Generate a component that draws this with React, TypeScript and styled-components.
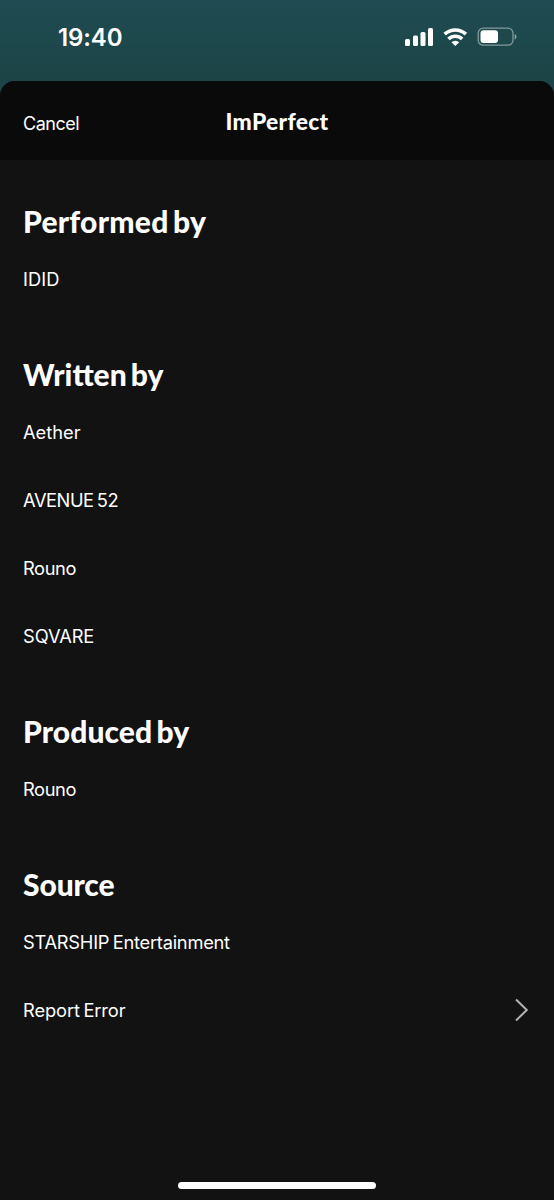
import React from "react";
import styled, { createGlobalStyle } from "styled-components";

const Global = createGlobalStyle`
  * { box-sizing: border-box; }
  body { margin: 0; background: #121212; font-family: Inter, "Liberation Sans", sans-serif; color: #fff; }
`;
const Screen = styled.div`
  width: 554px; height: 1200px; overflow: hidden; display: flex; flex-direction: column; position: relative;
  background: linear-gradient(#1f4b52, #1d484c 40px, #1c4244 95px);
`;
const StatusBar = styled.header`
  height: 81px; flex: none; display: flex; justify-content: space-between; align-items: flex-start;
  padding: 23px 37px 0 58px;
`;
const Clock = styled.span`
  font-size: 24px; line-height: 30px; font-weight: 600; letter-spacing: -0.1px;
`;
const StatusIcons = styled.svg`display: block; margin-top: 2px;`;
const Sheet = styled.main`
  flex: 1; background: #121212; border-radius: 15px 15px 0 0; overflow: hidden;
`;
const NavBar = styled.nav`
  height: 79px; background: #0a0a0a; display: grid; grid-template-columns: 1fr auto 1fr; align-items: center;
  padding: 3px 23px 0;
`;
const Label = styled.span<{ $spacing: number }>`
  white-space: nowrap; font-size: 18.3px; line-height: 24px; letter-spacing: ${p => p.$spacing}px; word-spacing: -1.5px;
`;
const Cancel = styled.button`
  all: unset; justify-self: start; font-size: 18px; line-height: 24px; padding-top: 4px; letter-spacing: -0.5px;
`;
const Title = styled.h1`
  margin: 0; padding-bottom: 2px; font-family: Lato, sans-serif; font-size: 22.8px; line-height: 28px; font-weight: 900;
  letter-spacing: 0.3px;
`;
const Content = styled.div`padding: 35px 23px 0; display: flex; flex-direction: column;`;
const Section = styled.section`margin-bottom: 35px; display: flex; flex-direction: column;`;
const Heading = styled.h2<{ $spacing: string }>`
  margin: 0; height: 50px; line-height: 52px; font-family: Lato, sans-serif; font-size: 30px; font-weight: 900;
  letter-spacing: ${p => p.$spacing}; word-spacing: -3px; white-space: nowrap;
`;
const Row = styled.div`
  height: 68px; display: flex; align-items: center; justify-content: space-between;
`;
const Chevron = styled.svg`display: block; margin-right: 1px;`;
const HomeIndicator = styled.div`
  position: absolute; left: 178px; bottom: 11px; width: 198px; height: 7px; border-radius: 4px; background: #fff;
`;

interface Credit { name: string; spacing: number; link?: boolean }
interface Group { title: string; spacing: string; credits: Credit[] }

const groups: Group[] = [
  { title: "Performed by", spacing: "0.27px", credits: [{ name: "IDID", spacing: 0.1 }] },
  {
    title: "Written by", spacing: "normal", credits: [
      { name: "Aether", spacing: 0 },
      { name: "AVENUE 52", spacing: -0.45 },
      { name: "Rouno", spacing: -0.4 },
      { name: "SQVARE", spacing: -0.1 },
    ],
  },
  { title: "Produced by", spacing: "0.1px", credits: [{ name: "Rouno", spacing: -0.4 }] },
  {
    title: "Source", spacing: "-0.1px", credits: [
      { name: "STARSHIP Entertainment", spacing: -0.25 },
      { name: "Report Error", spacing: -0.1, link: true },
    ],
  },
];

export default function App() {
  return (
    <Screen>
      <Global />
      <StatusBar>
        <Clock>19:40</Clock>
        <StatusIcons width="112" height="24" viewBox="405 25 112 24" fill="#fff">
          <rect x="405" y="39" width="5" height="7" rx="1.5" />
          <rect x="413" y="35.500" width="5" height="10.500" rx="1.5" />
          <rect x="420.500" y="32" width="5" height="14" rx="1.5" />
          <rect x="428" y="28" width="5" height="18" rx="1.5" />
          <path d="M444.700 34.200 A15.500 15.500 0 0 1 465.900 34.200" fill="none" stroke="#fff" strokeWidth="3.700" />
          <path d="M448.500 39 A9.800 9.800 0 0 1 462.100 39" fill="none" stroke="#fff" strokeWidth="3.500" />
          <path d="M455.300 46 L451.400 42.300 A5.600 5.600 0 0 1 459.200 42.300 Z" />
          <rect x="478.200" y="28.200" width="34.800" height="17" rx="5" fill="none" stroke="#fff" strokeOpacity="0.45" strokeWidth="1.300" />
          <rect x="480.500" y="30.300" width="17.500" height="12.800" rx="3" />
          <path d="M514.700 34 Q516.500 34.800 516.500 36.800 Q516.500 38.800 514.700 39.600 Z" fillOpacity="0.5" />
        </StatusIcons>
      </StatusBar>
      <Sheet>
        <NavBar><Cancel>Cancel</Cancel><Title>ImPerfect</Title></NavBar>
        <Content>
          {groups.map(group => (
            <Section key={group.title}>
              <Heading $spacing={group.spacing}>{group.title}</Heading>
              {group.credits.map(credit => (
                <Row key={credit.name}>
                  <Label $spacing={credit.spacing}>{credit.name}</Label>
                  {credit.link && (
                    <Chevron width="16" height="24" viewBox="0 0 16 24" fill="none" stroke="#b3b3b3" strokeWidth="2">
                      <path d="M2 1.500 L12.800 12 L2 22.500" />
                    </Chevron>
                  )}
                </Row>
              ))}
            </Section>
          ))}
        </Content>
      </Sheet>
      <HomeIndicator />
    </Screen>
  );
}
